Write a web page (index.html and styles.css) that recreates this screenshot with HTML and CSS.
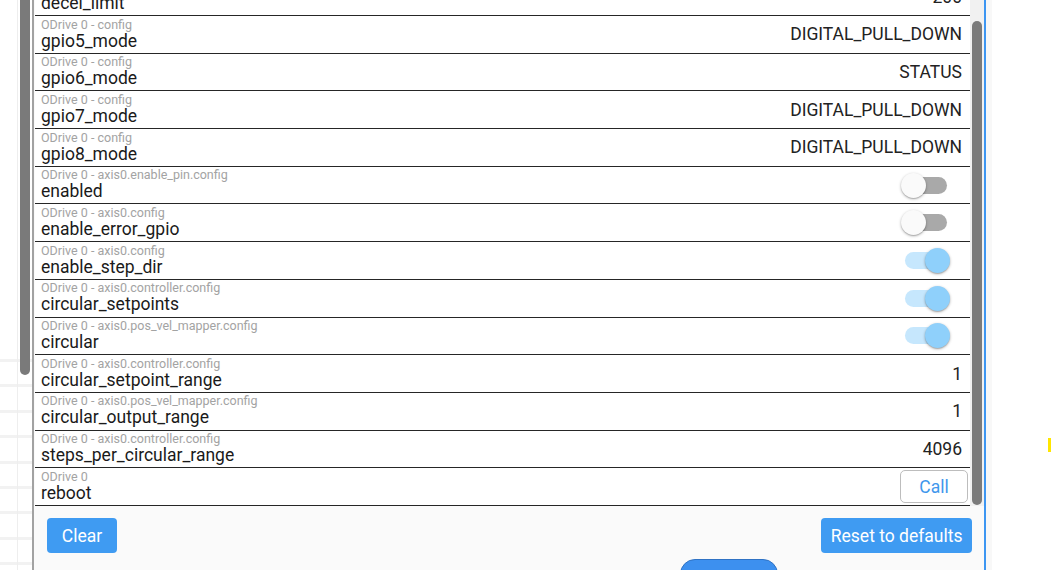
FILE: index.html
```html
<!DOCTYPE html>
<html>
<head>
<meta charset="utf-8">
<link rel="stylesheet" href="styles.css">
</head>
<body>
<div class="screen">
  <div class="bg-left">
    <div class="bg-line"></div>
    <div class="bg-thumb"></div>
  </div>
  <div class="dialog">
    <div class="body">
      <div class="list">
        <div class="row">
          <div class="info"><div class="src">ODrive 0 - axis0.trap_traj.config</div><div class="name">decel_limit</div></div>
          <div class="value">200</div>
        </div>
        <div class="row">
          <div class="info"><div class="src">ODrive 0 - config</div><div class="name">gpio5_mode</div></div>
          <div class="value">DIGITAL_PULL_DOWN</div>
        </div>
        <div class="row">
          <div class="info"><div class="src">ODrive 0 - config</div><div class="name">gpio6_mode</div></div>
          <div class="value">STATUS</div>
        </div>
        <div class="row">
          <div class="info"><div class="src">ODrive 0 - config</div><div class="name">gpio7_mode</div></div>
          <div class="value">DIGITAL_PULL_DOWN</div>
        </div>
        <div class="row">
          <div class="info"><div class="src">ODrive 0 - config</div><div class="name">gpio8_mode</div></div>
          <div class="value">DIGITAL_PULL_DOWN</div>
        </div>
        <div class="row">
          <div class="info"><div class="src">ODrive 0 - axis0.enable_pin.config</div><div class="name">enabled</div></div>
          <div class="switch"><div class="track"></div><div class="knob"></div></div>
        </div>
        <div class="row">
          <div class="info"><div class="src">ODrive 0 - axis0.config</div><div class="name">enable_error_gpio</div></div>
          <div class="switch"><div class="track"></div><div class="knob"></div></div>
        </div>
        <div class="row">
          <div class="info"><div class="src">ODrive 0 - axis0.config</div><div class="name">enable_step_dir</div></div>
          <div class="switch on"><div class="track"></div><div class="knob"></div></div>
        </div>
        <div class="row">
          <div class="info"><div class="src">ODrive 0 - axis0.controller.config</div><div class="name">circular_setpoints</div></div>
          <div class="switch on"><div class="track"></div><div class="knob"></div></div>
        </div>
        <div class="row">
          <div class="info"><div class="src">ODrive 0 - axis0.pos_vel_mapper.config</div><div class="name">circular</div></div>
          <div class="switch on"><div class="track"></div><div class="knob"></div></div>
        </div>
        <div class="row">
          <div class="info"><div class="src">ODrive 0 - axis0.controller.config</div><div class="name">circular_setpoint_range</div></div>
          <div class="value">1</div>
        </div>
        <div class="row">
          <div class="info"><div class="src">ODrive 0 - axis0.pos_vel_mapper.config</div><div class="name">circular_output_range</div></div>
          <div class="value">1</div>
        </div>
        <div class="row">
          <div class="info"><div class="src">ODrive 0 - axis0.controller.config</div><div class="name">steps_per_circular_range</div></div>
          <div class="value">4096</div>
        </div>
        <div class="row">
          <div class="info"><div class="src">ODrive 0</div><div class="name">reboot</div></div>
          <button class="btn-call">Call</button>
        </div>
      </div>
      <div class="vscroll"><div class="vthumb"></div></div>
    </div>
    <div class="footer">
      <button class="btn">Clear</button>
      <button class="btn">Reset to defaults</button>
    </div>
    <div class="peek-btn"></div>
  </div>
  <div class="bg-right"></div>
  <div class="marker"></div>
</div>
</body>
</html>
```

FILE: styles.css
```css
html, body {
  margin: 0;
  padding: 0;
  background: #ffffff;
}

.screen {
  position: relative;
  width: 1054px;
  height: 570px;
  overflow: hidden;
  display: flex;
  font-family: Roboto, "Liberation Sans", sans-serif;
  background: #ffffff;
}

.bg-left {
  width: 32px;
  flex: none;
  display: flex;
  background-color: #ffffff;
  background-image: repeating-linear-gradient(to bottom, #f2f2f2 0 3px, transparent 3px 25.4px);
  background-position: 0 359px;
  background-size: 100% 215px;
  background-repeat: no-repeat;
}

.bg-line {
  width: 1px;
  margin-left: 17px;
  background: #eeeeee;
}

.bg-thumb {
  width: 10px;
  height: 375px;
  margin-left: 2px;
  background: #7a7a7a;
  border-radius: 0 0 5px 5px;
}

.dialog {
  position: relative;
  width: 950px;
  flex: none;
  border-left: 2px solid #a2a2a2;
  border-right: 2px solid #3d96f2;
  background: #fafafa;
  display: flex;
  flex-direction: column;
}

.body {
  height: 506px;
  flex: none;
  overflow: hidden;
  display: flex;
}

.list {
  width: 935px;
  margin-left: 1px;
  margin-top: -21.7px;
  flex: none;
}

.row {
  height: 37.7px;
  box-sizing: border-box;
  border-bottom: 1px solid #262626;
  background: #ffffff;
  display: flex;
  align-items: center;
  padding: 0 8px 0 6px;
}

.info {
  align-self: stretch;
  display: flex;
  flex-direction: column;
  padding-top: 1.5px;
}

.src {
  font-size: 12.5px;
  line-height: 14px;
  color: #a3a3a3;
}

.name {
  font-size: 17.5px;
  line-height: 19px;
  color: #1a1a1a;
}

.value {
  margin-left: auto;
  font-size: 17.5px;
  color: #222222;
}

.switch {
  position: relative;
  margin-left: auto;
  margin-right: 12px;
  width: 49px;
  height: 25px;
}

.switch .track {
  position: absolute;
  left: 3.5px;
  right: 3.5px;
  top: 4px;
  height: 17px;
  border-radius: 8.5px;
  background: #a9a9a9;
}

.switch .knob {
  position: absolute;
  left: 0;
  top: 0;
  width: 25px;
  height: 25px;
  border-radius: 50%;
  background: #fafafa;
  box-shadow: 0 1px 3px rgba(0, 0, 0, 0.3), 0 1px 1px rgba(0, 0, 0, 0.14);
}

.switch.on .track {
  background: #c6e7fd;
}

.switch.on .knob {
  left: 24px;
  background: #8fd0fb;
}

.btn-call {
  margin-left: auto;
  margin-right: -6px;
  width: 68px;
  height: 33px;
  box-sizing: border-box;
  border: 1px solid #bdbdbd;
  border-radius: 5px;
  background: #ffffff;
  color: #3f97ec;
  font-family: Roboto, "Liberation Sans", sans-serif;
  font-size: 17.5px;
  padding: 0;
}

.vscroll {
  width: 14px;
  flex: none;
  background: #f1f1f1;
}

.vthumb {
  width: 10px;
  margin-left: 2px;
  margin-top: 20.5px;
  height: 484.5px;
  border-radius: 5px;
  background: #7b7b7b;
}

.footer {
  flex: 1;
  display: flex;
  justify-content: space-between;
  align-items: flex-start;
  padding: 12px 12px 0 13px;
  background: #fafafa;
}

.btn {
  height: 35px;
  min-width: 70px;
  padding: 0 9.5px;
  border: none;
  border-radius: 4px;
  background: #3f9bf2;
  color: #ffffff;
  font-family: Roboto, "Liberation Sans", sans-serif;
  font-size: 17.5px;
}

.peek-btn {
  position: absolute;
  left: 646px;
  top: 559px;
  width: 98px;
  height: 30px;
  box-sizing: border-box;
  border: 1px solid #2f72c4;
  border-radius: 15px;
  background: #3d90ef;
}

.bg-right {
  width: 6px;
  flex: none;
  background: #f8f8f8;
}

.marker {
  position: absolute;
  left: 1048px;
  top: 438px;
  width: 3px;
  height: 14px;
  background: #ffe600;
}
```
